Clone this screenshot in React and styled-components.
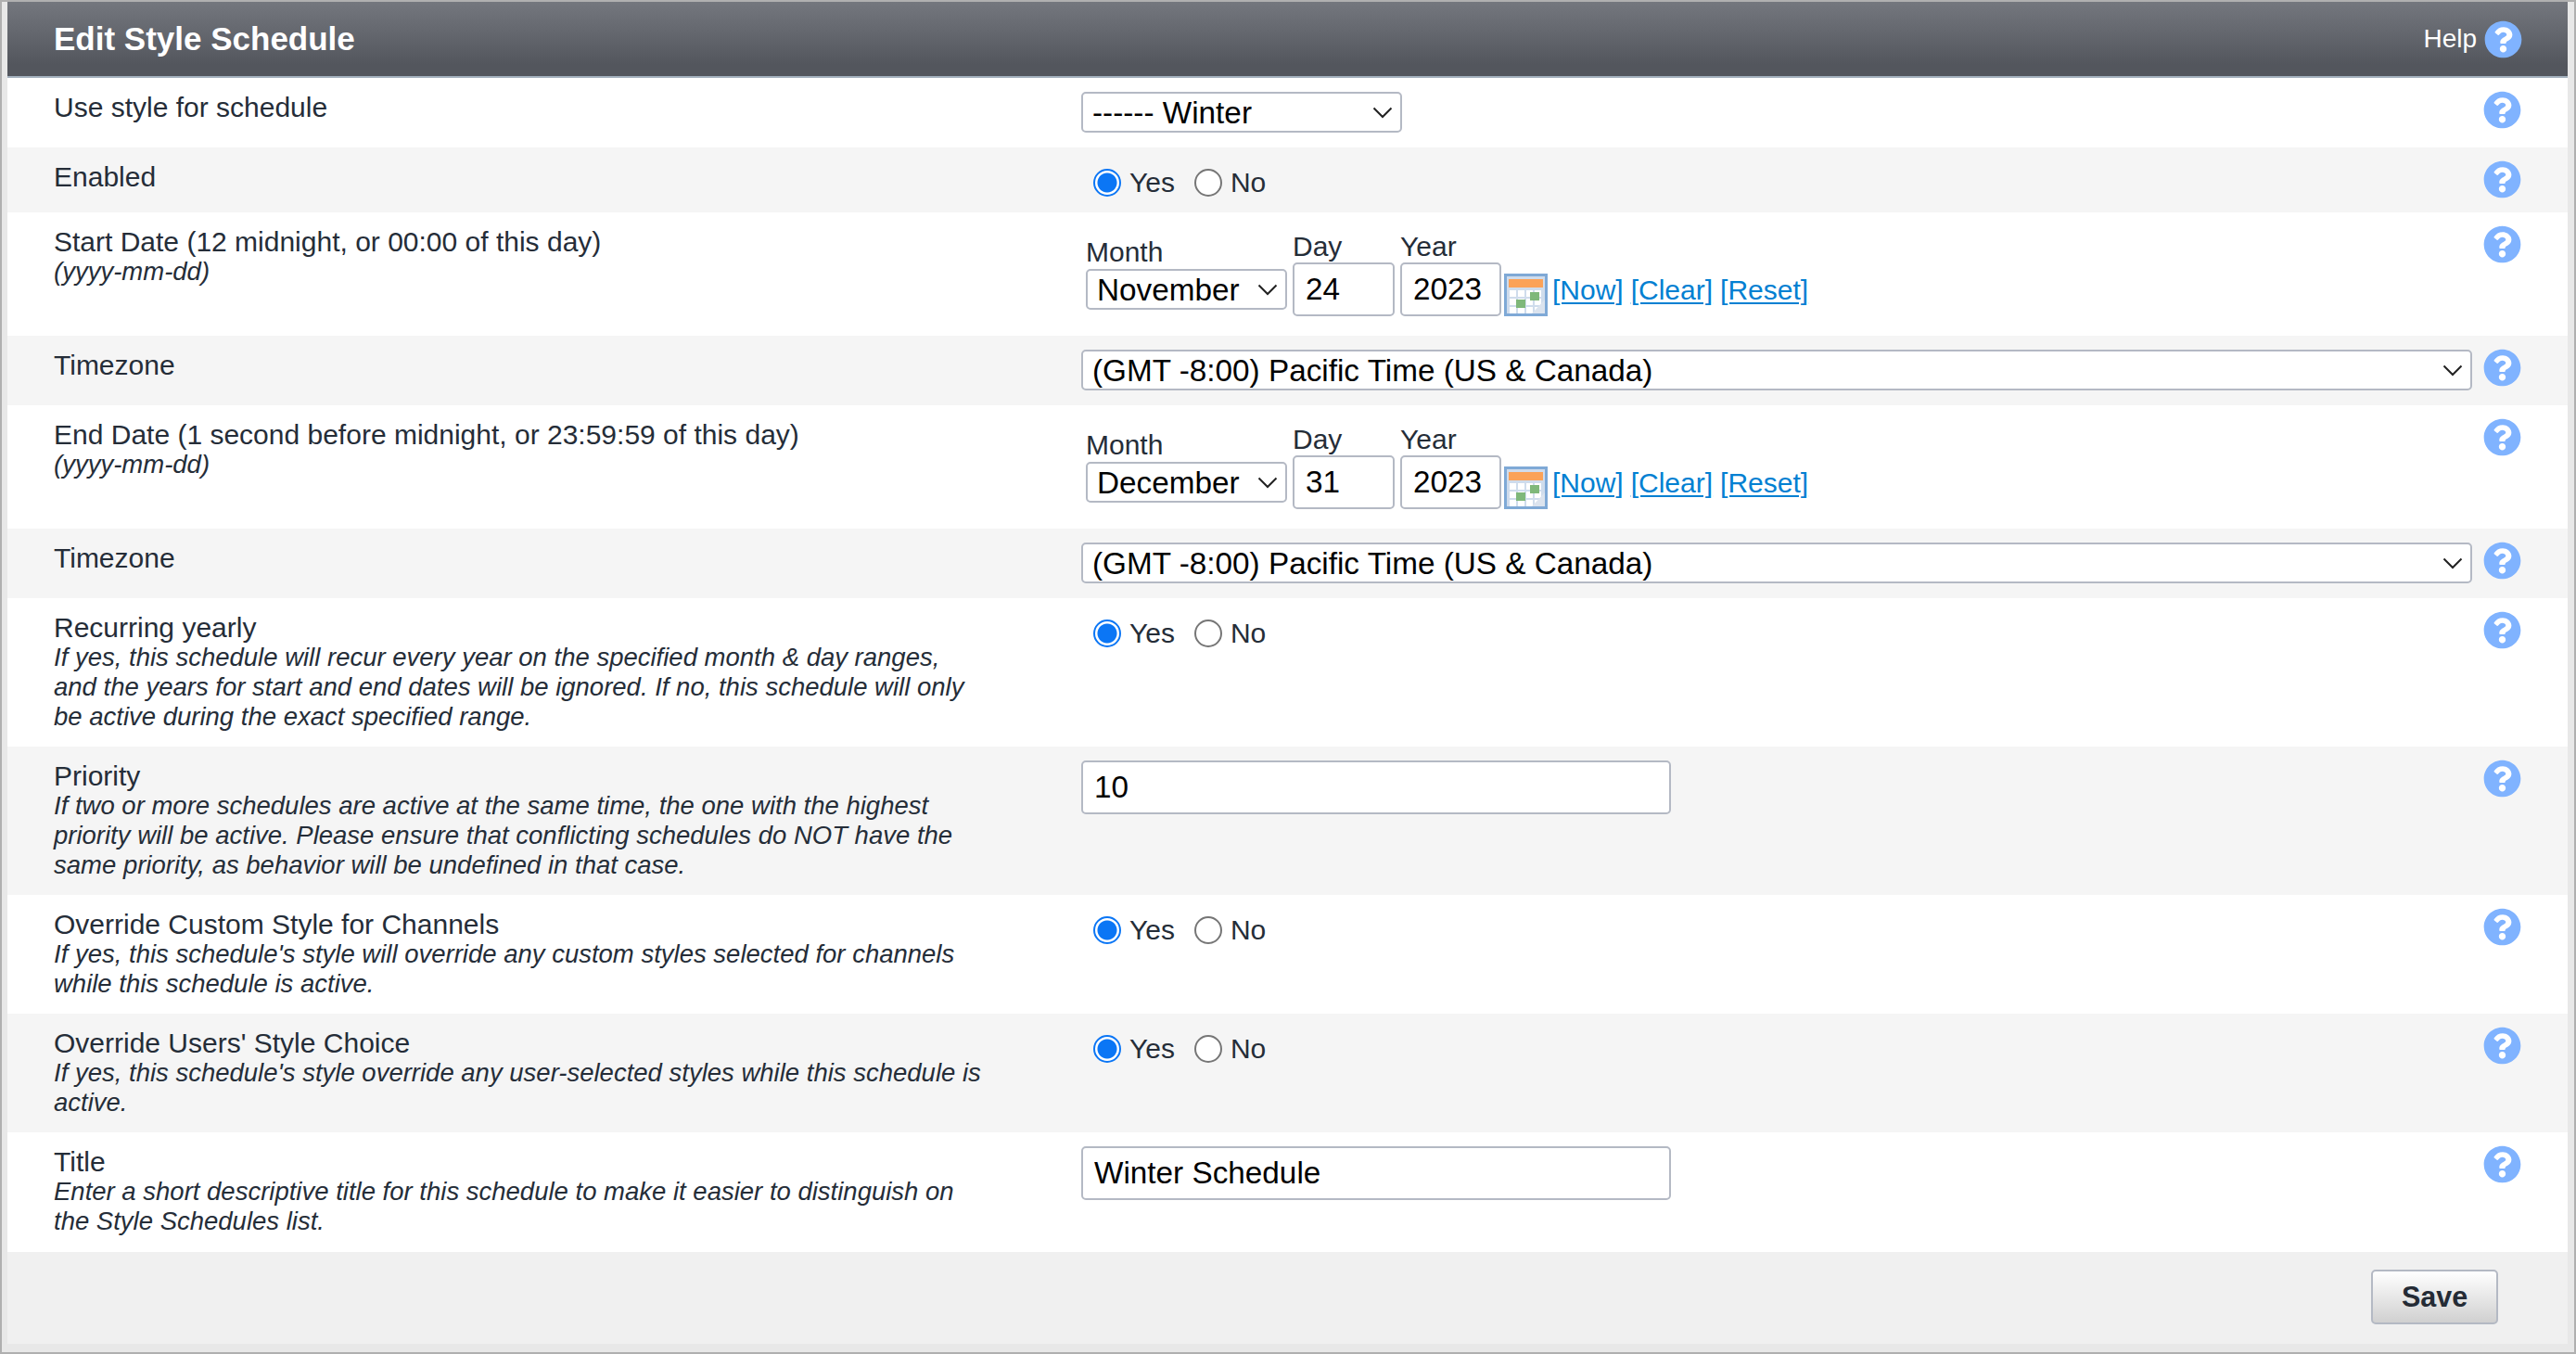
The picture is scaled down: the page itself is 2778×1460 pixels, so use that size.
import React from "react";
import styled, { createGlobalStyle } from "styled-components";
import { FaQuestionCircle } from "react-icons/fa";

const Global = createGlobalStyle`
  html, body { margin: 0; padding: 0; background: #e8e8e8; }
  body { font-family: "Liberation Sans", Arial, sans-serif; color: #252d38; }
`;

const Frame = styled.div`
  width: 2778px;
  height: 1460px;
  box-sizing: border-box;
  border: 2px solid #b0b0b0;
  background: #e8e8e8;
  padding: 0 7px 9px 6px;
  display: flex;
  flex-direction: column;
`;
const Header = styled.header`
  height: 80px;
  flex: none;
  box-sizing: content-box;
  border-bottom: 2px solid #a3b0bd;
  background: linear-gradient(#74777e, #53565d 85%);
  display: flex;
  align-items: center;
  justify-content: space-between;
  padding: 0 49px 0 50px;
  color: #fff;
`;
const Title = styled.h1`
  margin: 0;
  font-size: 35px;
  font-weight: 700;
  line-height: 40px;
`;
const HelpLink = styled.div`
  display: flex;
  align-items: center;
  gap: 8px;
  font-size: 28px;
`;
const HelpIcon = styled(FaQuestionCircle)`
  width: 41px;
  height: 41px;
  flex: none;
  display: block;
  color: #80b3ff;
  background: radial-gradient(circle, #fff 60%, transparent 62%);
  border-radius: 50%;
`;
const Row = styled.section`
  display: grid;
  grid-template-columns: 1158px 1500px 1fr;
  min-height: ${(p) => p.$h}px;
  flex: none;
  box-sizing: border-box;
  background: ${(p) => (p.$alt ? "#f5f5f5" : "#fff")};
`;
const LabelCell = styled.div`
  padding: 15px 0 0 50px;
`;
const Label = styled.div`
  font-size: 30px;
  line-height: 33px;
`;
const Desc = styled.div`
  font-size: 27.5px;
  line-height: 32px;
  font-style: italic;
  width: 1005px;
`;
const ControlCell = styled.div`
  padding-top: 15px;
`;
const HelpCell = styled.div`
  padding: 14px 0 0 12px;
`;
const Select = styled.select`
  appearance: none;
  display: block;
  box-sizing: border-box;
  height: 44px;
  width: ${(p) => p.$w || "100%"};
  border: 2px solid #b4b9c4;
  border-radius: 5px;
  padding: 0 0 0 10px;
  font: 33.3px "Liberation Sans", Arial, sans-serif;
  color: #000;
  background-color: #fff;
  background-image: url("data:image/svg+xml,%3Csvg xmlns='http://www.w3.org/2000/svg' width='22' height='14' viewBox='0 0 22 14'%3E%3Cpath d='M1.5 2.5 L11 12 L20.5 2.5' fill='none' stroke='%23222' stroke-width='2'/%3E%3C/svg%3E");
  background-repeat: no-repeat;
  background-position: right 8px center;
`;
const TextInput = styled.input`
  display: block;
  box-sizing: border-box;
  height: 58px;
  width: ${(p) => p.$w}px;
  border: 2px solid #b4b9c4;
  border-radius: 5px;
  padding: 0 12px;
  font: 33.3px "Liberation Sans", Arial, sans-serif;
  color: #000;
  background: #fff;
`;
const RadioGroup = styled.div`
  display: flex;
  align-items: center;
  height: 46px;
  padding-left: 13px;
  font-size: 30px;
`;
const RadioLabel = styled.label`
  display: flex;
  align-items: center;
  gap: 9px;
  margin-right: 21px;
`;
const Radio = styled.input.attrs({ type: "radio" })`
  appearance: none;
  margin: 0;
  width: 30px;
  height: 30px;
  box-sizing: border-box;
  border-radius: 50%;
  border: 2px solid #767676;
  background: #fff;
  &:checked {
    border: 2px solid #0b76f5;
    background: radial-gradient(circle, #0b76f5 0, #0b76f5 10px, #fff 11px);
  }
`;
const DateLine = styled.div`
  display: flex;
  align-items: flex-end;
  padding-left: 5px;
  margin-top: 5px;
`;
const Field = styled.div`
  display: flex;
  flex-direction: column;
  margin: 0 ${(p) => p.$right}px ${(p) => p.$lift || 0}px 0;
`;
const FieldLabel = styled.span`
  font-size: 30px;
  line-height: 34px;
  margin-bottom: ${(p) => p.$gap || 0}px;
`;
const CalendarSvg = styled.svg`
  width: 47px;
  height: 46px;
  flex: none;
  margin: 0 5px 0 -3px;
`;
const Links = styled.div`
  display: flex;
  gap: 8px;
  font-size: 30px;
  line-height: 56px;
  align-self: flex-end;
`;
const LinkBtn = styled.a`
  color: #0280d2;
  text-decoration: underline;
  text-decoration-thickness: 2px;
  text-underline-offset: 3px;
`;
const Footer = styled.footer`
  flex: 1;
  background: #f0f0f0;
  display: flex;
  justify-content: flex-end;
  padding: 19px 75px 0 0;
`;
const SaveButton = styled.button`
  width: 137px;
  height: 59px;
  box-sizing: border-box;
  border: 2px solid #b4b9c4;
  border-radius: 5px;
  background: linear-gradient(#fff, #d0d0d0);
  font: 700 30.5px "Liberation Sans", Arial, sans-serif;
  color: #242b35;
`;

const Calendar = () => (
  <CalendarSvg viewBox="0 0 47 46">
    <rect x="0" y="0" width="47" height="46" fill="#7fa9d6" />
    <rect x="3" y="3" width="41" height="40" fill="#cfdcec" />
    <rect x="5" y="6" width="37" height="9" fill="#fba258" />
    <g fill="#ffffff">
      {[6, 15, 24, 33].map((x) =>
        [18, 27, 36].map((y) => <rect key={x + "-" + y} x={x} y={y} width="7" height="7" />)
      )}
    </g>
    <rect x="13" y="28" width="10" height="9" fill="#7fb87a" />
    <rect x="28" y="20" width="10" height="9" fill="#7fb87a" />
    <path d="M44 28 L44 43 L30 43 Z" fill="#dbe3ee" />
  </CalendarSvg>
);

const YesNo = () => {
  const name = React.useId();
  return (
    <RadioGroup>
      <RadioLabel><Radio name={name} defaultChecked />Yes</RadioLabel>
      <RadioLabel><Radio name={name} />No</RadioLabel>
    </RadioGroup>
  );
};

const Tz = () => (
  <Select defaultValue="pt"><option value="pt">(GMT -8:00) Pacific Time (US &amp; Canada)</option></Select>
);

const DateControl = ({ month, day }) => (
  <DateLine>
    <Field $lift={7} $right={6}>
      <FieldLabel $gap={1}>Month</FieldLabel>
      <Select $w="217px" defaultValue={month}><option>{month}</option></Select>
    </Field>
    <Field $right={6}>
      <FieldLabel>Day</FieldLabel>
      <TextInput $w={110} defaultValue={day} />
    </Field>
    <Field $right={6}>
      <FieldLabel>Year</FieldLabel>
      <TextInput $w={109} defaultValue="2023" />
    </Field>
    <Calendar />
    <Links>
      <LinkBtn href="#">[Now]</LinkBtn>
      <LinkBtn href="#">[Clear]</LinkBtn>
      <LinkBtn href="#">[Reset]</LinkBtn>
    </Links>
  </DateLine>
);

const rows = [
  { h: 75, label: "Use style for schedule", control: <Select $w="346px" defaultValue="w"><option value="w">------ Winter</option></Select> },
  { h: 70, alt: true, label: "Enabled", control: <YesNo /> },
  { h: 133, label: "Start Date (12 midnight, or 00:00 of this day)", desc: "(yyyy-mm-dd)", control: <DateControl month="November" day="24" /> },
  { h: 75, alt: true, label: "Timezone", control: <Tz /> },
  { h: 133, label: "End Date (1 second before midnight, or 23:59:59 of this day)", desc: "(yyyy-mm-dd)", control: <DateControl month="December" day="31" /> },
  { h: 75, alt: true, label: "Timezone", control: <Tz /> },
  { h: 160, label: "Recurring yearly", desc: "If yes, this schedule will recur every year on the specified month & day ranges, and the years for start and end dates will be ignored. If no, this schedule will only be active during the exact specified range.", control: <YesNo /> },
  { h: 160, alt: true, label: "Priority", desc: "If two or more schedules are active at the same time, the one with the highest priority will be active. Please ensure that conflicting schedules do NOT have the same priority, as behavior will be undefined in that case.", control: <TextInput $w={636} defaultValue="10" /> },
  { h: 128, label: "Override Custom Style for Channels", desc: "If yes, this schedule's style will override any custom styles selected for channels while this schedule is active.", control: <YesNo /> },
  { h: 128, alt: true, label: "Override Users' Style Choice", desc: "If yes, this schedule's style override any user-selected styles while this schedule is active.", control: <YesNo /> },
  { h: 129, label: "Title", desc: "Enter a short descriptive title for this schedule to make it easier to distinguish on the Style Schedules list.", control: <TextInput $w={636} defaultValue="Winter Schedule" /> },
];

export default function App() {
  return (
    <>
      <Global />
      <Frame>
        <Header>
          <Title>Edit Style Schedule</Title>
          <HelpLink>Help <HelpIcon /></HelpLink>
        </Header>
        {rows.map((r, i) => (
          <Row key={i} $h={r.h} $alt={r.alt}>
            <LabelCell>
              <Label>{r.label}</Label>
              {r.desc && <Desc>{r.desc}</Desc>}
            </LabelCell>
            <ControlCell>{r.control}</ControlCell>
            <HelpCell><HelpIcon /></HelpCell>
          </Row>
        ))}
        <Footer><SaveButton>Save</SaveButton></Footer>
      </Frame>
    </>
  );
}
